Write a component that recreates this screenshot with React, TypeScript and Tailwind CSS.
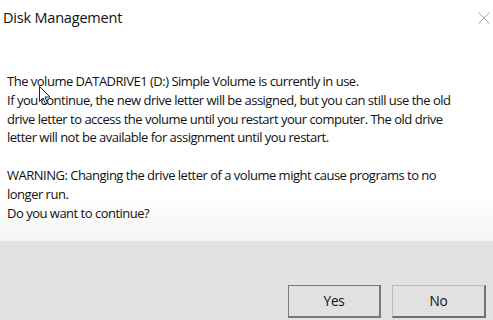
export default function App() {
  return (
    <div className="relative w-[493px] h-[320px] bg-white overflow-hidden font-['Open_Sans','Noto_Sans',sans-serif] text-[#111]">
      {/* Title bar */}
      <div className="h-[36px] flex items-start justify-between">
        <h1 className="pl-[3px] pt-[8px] text-[14.5px] leading-[20px] tracking-[-0.2px]">Disk Management</h1>
        <svg width="12" height="12" viewBox="0 0 12 12" className="mt-[12px] mr-[3px]">
          <path d="M0.5 0.5 L11.5 11.5 M11.5 0.5 L0.5 11.5" stroke="#a8a8a8" strokeWidth="1" />
        </svg>
      </div>

      {/* Message */}
      <div className="h-[205px] px-[7px] pt-[36px] bg-gradient-to-b from-white from-80% to-[#f3f3f3] text-[13px] leading-[18.8px] tracking-[-0.5px] whitespace-nowrap">
        <p>The volume DATADRIVE1 (D:) Simple Volume is currently in use.</p>
        <p>
          If you continue, the new drive letter will be assigned, but you can still use the old
          <br />
          drive letter to access the volume until you restart your computer. The old drive
          <br />
          letter will not be available for assignment until you restart.
        </p>
        <p className="mt-[18.8px]">
          WARNING: Changing the drive letter of a volume might cause programs to no
          <br />
          longer run.
        </p>
        <p>Do you want to continue?</p>
      </div>

      {/* Footer */}
      <div className="h-[79px] bg-[#e2e2e2] flex items-start justify-end gap-[11px] pt-[44px] pr-[7px]">
        <button className="w-[93px] h-[33px] bg-[#e1e1e1] border border-[#7a7a7a] border-b-2 border-r-2 text-[13.6px] tracking-[-0.3px]">
          Yes
        </button>
        <button className="w-[94px] h-[33px] bg-[#e1e1e1] border border-[#bdbdbd] border-b-2 border-r-2 border-b-[#6f6f6f] border-r-[#6f6f6f] text-[13.6px] tracking-[-0.3px]">
          No
        </button>
      </div>

      {/* Mouse cursor */}
      <svg width="12" height="19" viewBox="0 0 12 19" className="absolute left-[39px] top-[86px]">
        <path d="M0.5 0.5 L0.5 15.5 L4 12 L6.5 18 L8.5 17 L6 11 L11 11 Z" fill="white" stroke="#222" strokeWidth="1" />
      </svg>
    </div>
  );
}
